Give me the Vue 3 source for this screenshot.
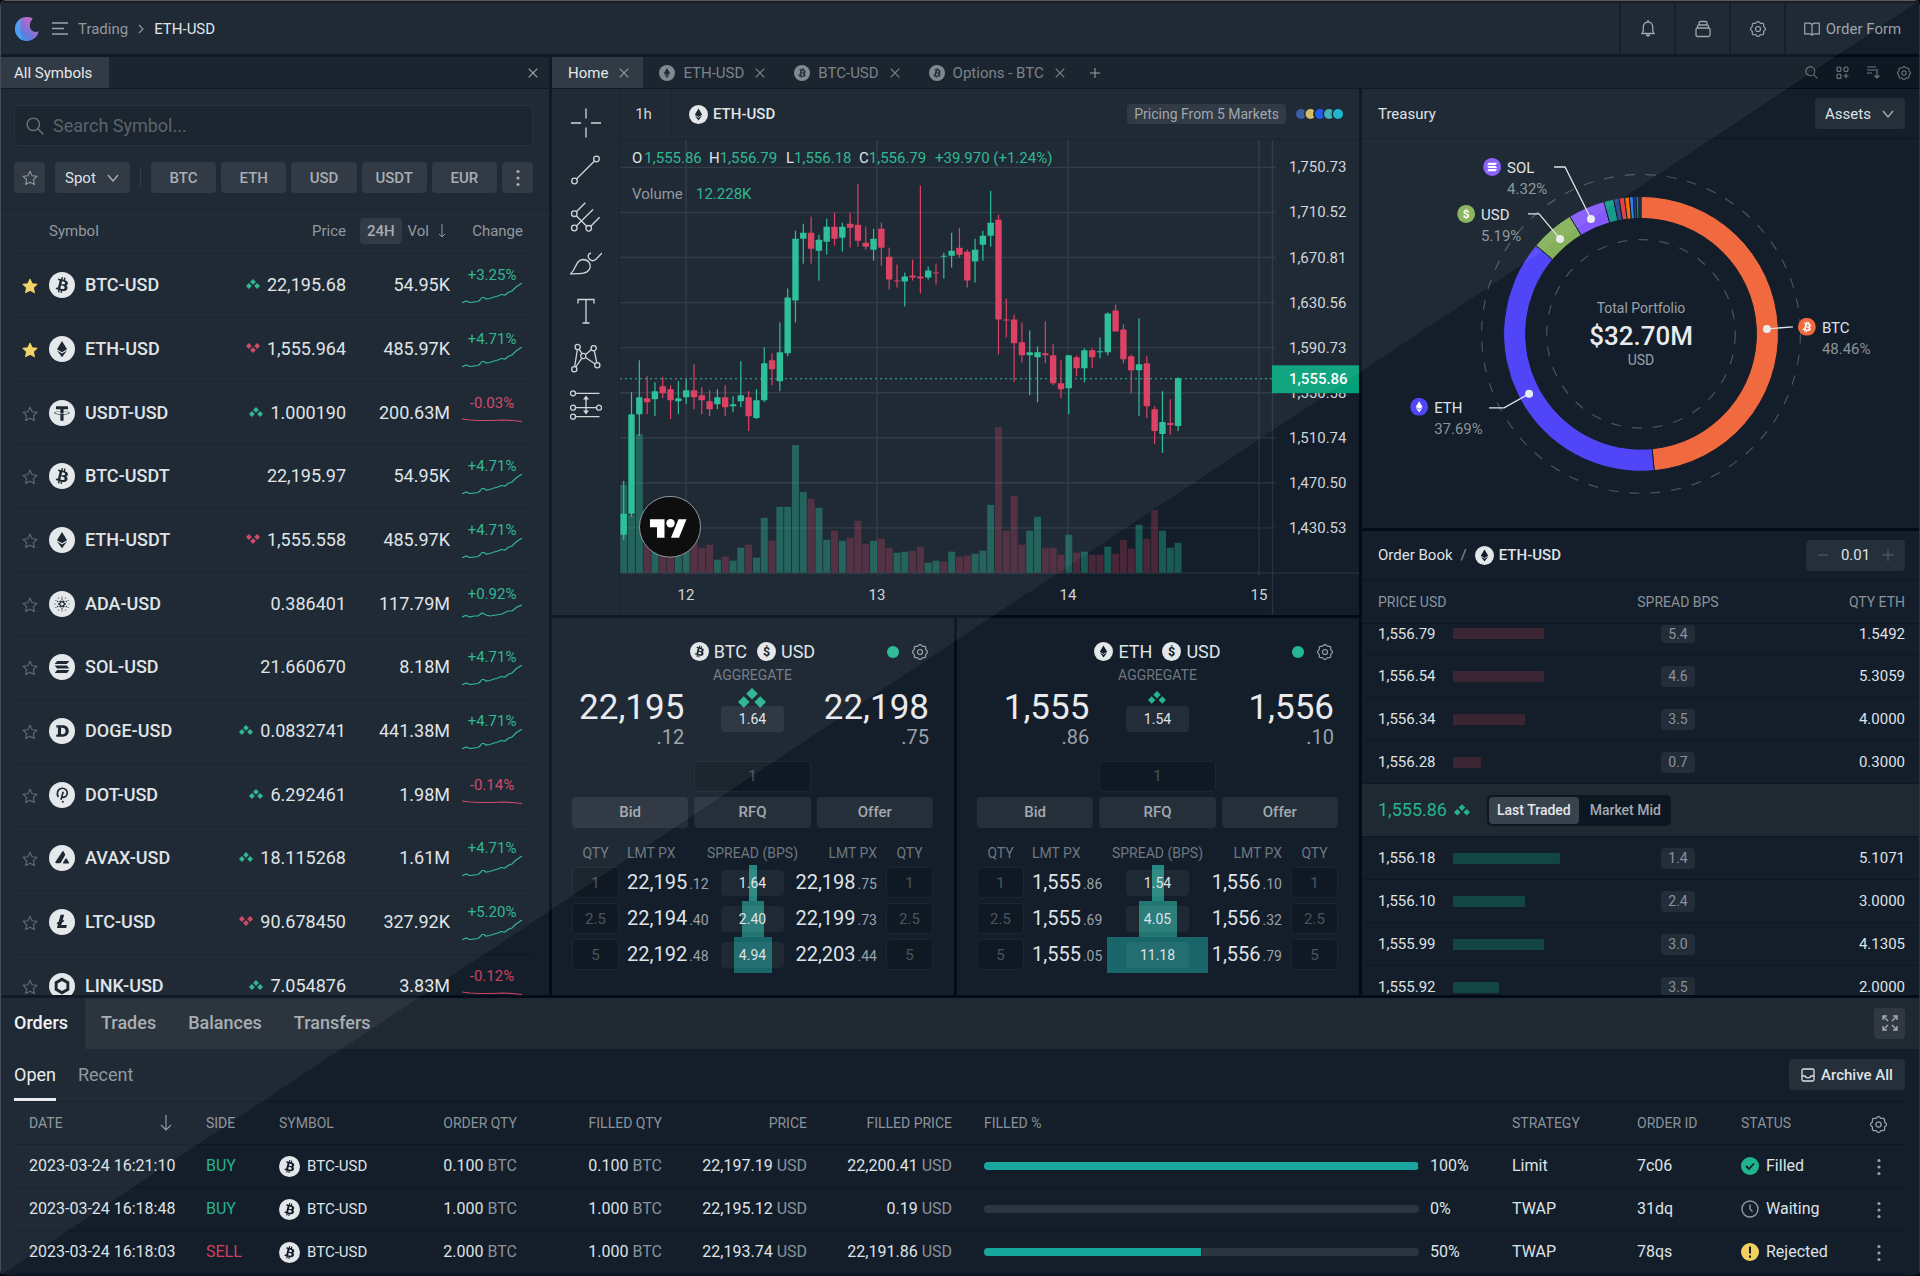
<script setup>
import { ref } from 'vue'

const search = ref('')
const market = ref('Spot')
const treasuryView = ref('Assets')
const priceMode = ref('last')

const quotes = ['BTC', 'ETH', 'USD', 'USDT', 'EUR']

const sparks = {
  rise: '0,20 2,19 4,18 8,19.5 12,19 16,18.5 18,17 20,14.5 22,14.5 24,16 28,15.5 32,14 36,13 39,11.5 43,12 46,9.5 50,8 54,4 57,2 60,0',
  flat: '0,8 8,9 18,9.5 30,9.5 40,9 50,9.5 60,10.5',
  mild: '0,15 4,13.5 8,15 12,14 16,14 20,11 24,13 28,14 34,13 40,12 46,9 50,9 55,5 60,3',
}

const symbols = [
  { fav: true, coin: 'btc', name: 'BTC-USD', dir: 'up', price: '22,195.68', vol: '54.95K', change: '+3.25%', spark: 'rise' },
  { fav: true, coin: 'eth', name: 'ETH-USD', dir: 'down', price: '1,555.964', vol: '485.97K', change: '+4.71%', spark: 'rise' },
  { coin: 'usdt', name: 'USDT-USD', dir: 'up', price: '1.000190', vol: '200.63M', change: '-0.03%', spark: 'flat' },
  { coin: 'btc', name: 'BTC-USDT', price: '22,195.97', vol: '54.95K', change: '+4.71%', spark: 'rise' },
  { coin: 'eth', name: 'ETH-USDT', dir: 'down', price: '1,555.558', vol: '485.97K', change: '+4.71%', spark: 'rise' },
  { coin: 'ada', name: 'ADA-USD', price: '0.386401', vol: '117.79M', change: '+0.92%', spark: 'mild' },
  { coin: 'sol', name: 'SOL-USD', price: '21.660670', vol: '8.18M', change: '+4.71%', spark: 'rise' },
  { coin: 'doge', name: 'DOGE-USD', dir: 'up', price: '0.0832741', vol: '441.38M', change: '+4.71%', spark: 'rise' },
  { coin: 'dot', name: 'DOT-USD', dir: 'up', price: '6.292461', vol: '1.98M', change: '-0.14%', spark: 'flat' },
  { coin: 'avax', name: 'AVAX-USD', dir: 'up', price: '18.115268', vol: '1.61M', change: '+4.71%', spark: 'rise' },
  { coin: 'ltc', name: 'LTC-USD', dir: 'down', price: '90.678450', vol: '327.92K', change: '+5.20%', spark: 'rise' },
  { coin: 'link', name: 'LINK-USD', dir: 'up', price: '7.054876', vol: '3.83M', change: '-0.12%', spark: 'flat' },
]

const tabs = [
  { coin: 'eth', name: 'ETH-USD' },
  { coin: 'btc', name: 'BTC-USD' },
  { coin: 'btc', name: 'Options - BTC' },
]

// Candles: direction, high, body top, body bottom, low, volume top, volume direction when it differs
const candleRows = [
  ['g', 481, 514, 535, 540, 485], ['g', 392, 414, 514, 517, 515], ['g', 360, 397, 414, 436, 434],
  ['r', 376, 398, 402, 414, 545], ['g', 382, 391, 399, 416, 543], ['r', 377, 386, 393, 398, 550],
  ['r', 385, 389, 400, 419, 553], ['g', 381, 398, 401, 414, 556], ['g', 379, 390, 397, 404, 545],
  ['r', 364, 390, 397, 409, 543], ['r', 387, 395, 400, 414, 548], ['r', 390, 401, 409, 416, 545],
  ['g', 389, 397, 404, 409, 560], ['r', 385, 397, 407, 416, 557], ['g', 396, 404, 406, 412, 561],
  ['g', 361, 395, 401, 407, 548], ['r', 391, 397, 416, 431, 545], ['g', 389, 400, 418, 419, 558],
  ['g', 347, 363, 400, 402, 518], ['r', 353, 360, 369, 385, 541], ['g', 322, 352, 381, 391, 507],
  ['g', 288, 297, 353, 356, 507], ['g', 230, 238, 300, 322, 445], ['g', 223, 232, 238, 263, 492],
  ['r', 216, 232, 248, 263, 499], ['g', 234, 239, 250, 280, 508], ['g', 218, 226, 241, 254, 540],
  ['r', 212, 226, 238, 245, 531], ['g', 222, 226, 237, 251, 541], ['r', 212, 223, 227, 247, 538],
  ['r', 183, 224, 240, 246, 521], ['r', 226, 242, 246, 249, 544], ['g', 228, 238, 249, 260, 541],
  ['r', 222, 228, 247, 265, 539], ['r', 247, 256, 279, 289, 548], ['r', 264, 280, 281, 287, 553, 'g'],
  ['g', 272, 276, 281, 306, 552], ['r', 259, 275, 277, 280, 551], ['r', 185, 276, 278, 293, 547],
  ['g', 266, 270, 277, 279, 563], ['r', 263, 272, 273, 284, 561, 'g'], ['g', 252, 255, 256, 278, 562, 'r'],
  ['g', 232, 250, 255, 267, 552], ['r', 227, 247, 254, 257, 557], ['r', 249, 251, 280, 287, 556],
  ['g', 238, 249, 261, 282, 554], ['g', 230, 235, 244, 260, 551], ['g', 190, 222, 235, 246, 505],
  ['r', 214, 219, 319, 354, 427], ['r', 298, 319, 320, 337, 531], ['r', 314, 319, 343, 382, 496],
  ['r', 322, 342, 355, 362, 545], ['g', 330, 352, 355, 395, 531], ['g', 346, 352, 357, 402, 517],
  ['r', 321, 353, 355, 363, 548], ['r', 344, 355, 383, 385, 548], ['r', 360, 383, 389, 398, 555],
  ['g', 355, 355, 388, 414, 535], ['r', 355, 357, 368, 376, 553], ['g', 348, 350, 368, 382, 552],
  ['r', 348, 350, 357, 368, 555], ['g', 337, 351, 352, 358, 555, 'r'], ['g', 312, 313, 352, 355, 547],
  ['r', 304, 310, 331, 331, 554], ['r', 324, 329, 359, 363, 540], ['r', 354, 356, 370, 393, 549],
  ['g', 318, 364, 370, 416, 525], ['r', 356, 363, 406, 418, 539], ['r', 406, 409, 431, 444, 510],
  ['g', 391, 422, 434, 453, 531], ['r', 399, 423, 425, 435, 548, 'g'], ['g', 377, 378, 426, 431, 543],
]
const candles = candleRows.map(([dir, high, top, bottom, low, volume, volumeDir], i) => ({
  x: 623.7 + i * 7.808, dir, high, top, bottom, low, volume, volumeDir: volumeDir || dir,
}))

const priceTicks = ['1,750.73', '1,710.52', '1,670.81', '1,630.56', '1,590.73', '1,550.58', '1,510.74', '1,470.50', '1,430.53']
  .map((label, i) => ({ label, y: 166.5 + i * 45.2 }))
const dayTicks = ['12', '13', '14', '15'].map((label, i) => ({ label, x: 686 + i * 191 }))

const tickets = [
  {
    base: 'BTC', coin: 'btc', bid: '22,195', bidFrac: '.12', ask: '22,198', askFrac: '.75', spread: '1.64', arrow: 'large',
    levels: [
      { qty: '1', bid: '22,195', bidFrac: '.12', spread: '1.64', depth: 8, ask: '22,198', askFrac: '.75' },
      { qty: '2.5', bid: '22,194', bidFrac: '.40', spread: '2.40', depth: 22, ask: '22,199', askFrac: '.73' },
      { qty: '5', bid: '22,192', bidFrac: '.48', spread: '4.94', depth: 38, ask: '22,203', askFrac: '.44' },
    ],
  },
  {
    base: 'ETH', coin: 'eth', bid: '1,555', bidFrac: '.86', ask: '1,556', askFrac: '.10', spread: '1.54', arrow: 'small',
    levels: [
      { qty: '1', bid: '1,555', bidFrac: '.86', spread: '1.54', depth: 12, ask: '1,556', askFrac: '.10' },
      { qty: '2.5', bid: '1,555', bidFrac: '.69', spread: '4.05', depth: 38, ask: '1,556', askFrac: '.32' },
      { qty: '5', bid: '1,555', bidFrac: '.05', spread: '11.18', depth: 101, ask: '1,556', askFrac: '.79' },
    ],
  },
]

const CX = 1641
const CY = 334
function polar(r, deg) {
  const a = (deg * Math.PI) / 180
  return `${(CX + r * Math.sin(a)).toFixed(2)} ${(CY - r * Math.cos(a)).toFixed(2)}`
}
function slice(from, to) {
  const large = to - from > 180 ? 1 : 0
  return `M${polar(137.5, from)}A137.5 137.5 0 ${large} 1 ${polar(137.5, to)}L${polar(115.5, to)}A115.5 115.5 0 ${large} 0 ${polar(115.5, from)}Z`
}
const slices = [
  { color: '#f16a3f', from: 0, to: 174.5 },
  { color: '#5046f8', from: 174.5, to: 310.1 },
  { color: '#84b15a', from: 310.1, to: 328.8 },
  { color: '#8459fa', from: 328.8, to: 344.3 },
  { color: '#159a8c', from: 344.3, to: 348.5 },
  { color: '#2d4f91', from: 348.5, to: 350.8 },
  { color: '#e2424c', from: 350.8, to: 353.1 },
  { color: '#ff6a0a', from: 353.1, to: 355.2 },
  { color: '#2f86de', from: 355.2, to: 356.8 },
  { color: '#2b3aa8', from: 356.8, to: 358 },
  { color: '#12a08e', from: 358, to: 359.1 },
  { color: '#22406e', from: 359.1, to: 360 },
].map((s) => ({ color: s.color, d: slice(s.from, s.to) }))

const holdings = [
  { name: 'SOL', share: '4.32%', coin: 'sol', color: '#8459fa', x: 1492, y: 167, dot: [1591, 219], line: '1591,219 1565,167 1554,167' },
  { name: 'USD', share: '5.19%', coin: 'usd', color: '#84b15a', x: 1466, y: 214, dot: [1560, 239], line: '1560,239 1539,214 1528,214' },
  { name: 'ETH', share: '37.69%', coin: 'eth', color: '#5046f8', x: 1419, y: 407, dot: [1529, 394], line: '1529,394 1504,408 1489,408' },
  { name: 'BTC', share: '48.46%', coin: 'btc', color: '#f16a3f', x: 1807, y: 327, dot: [1767, 329], line: '1767,329 1793,327' },
]

const asks = [
  { price: '1,556.79', size: 91, bps: '5.4', qty: '1.5492' },
  { price: '1,556.54', size: 91, bps: '4.6', qty: '5.3059' },
  { price: '1,556.34', size: 72, bps: '3.5', qty: '4.0000' },
  { price: '1,556.28', size: 28, bps: '0.7', qty: '0.3000' },
]
const bids = [
  { price: '1,556.18', size: 107, bps: '1.4', qty: '5.1071' },
  { price: '1,556.10', size: 72, bps: '2.4', qty: '3.0000' },
  { price: '1,555.99', size: 91, bps: '3.0', qty: '4.1305' },
  { price: '1,555.92', size: 46, bps: '3.5', qty: '2.0000' },
]

const orders = [
  { date: '2023-03-24 16:21:10', side: 'BUY', qty: '0.100', filledQty: '0.100', price: '22,197.19', filledPrice: '22,200.41', pct: 100, strategy: 'Limit', id: '7c06', status: 'Filled' },
  { date: '2023-03-24 16:18:48', side: 'BUY', qty: '1.000', filledQty: '1.000', price: '22,195.12', filledPrice: '0.19', pct: 0, strategy: 'TWAP', id: '31dq', status: 'Waiting' },
  { date: '2023-03-24 16:18:03', side: 'SELL', qty: '2.000', filledQty: '1.000', price: '22,193.74', filledPrice: '22,191.86', pct: 50, strategy: 'TWAP', id: '78qs', status: 'Rejected' },
]

const gearPath = 'M' + Array.from({ length: 64 }, (_, i) => {
  const a = (i / 64) * Math.PI * 2
  const r = 6.9 + 0.65 * Math.cos(8 * a)
  return `${(8 + r * Math.sin(a)).toFixed(2)} ${(8 - r * Math.cos(a)).toFixed(2)}`
}).join('L') + 'Z'

const adaDots = [[3.2, 6, 1.5], [6.2, 6, 0.9], [8.6, 12, 0.7]].flatMap(([r, n, size], ring) =>
  Array.from({ length: n }, (_, i) => {
    const a = ((i + (ring === 1 ? 0.5 : 0)) / n) * Math.PI * 2
    return { x: 16 + r * Math.cos(a), y: 16 + r * Math.sin(a), size }
  }))
</script>

<template>
  <div class="app">
    <svg class="defs" aria-hidden="true">
      <defs>
        <symbol id="c-btc" viewBox="0 0 32 32">
          <circle class="disc" cx="16" cy="16" r="16" />
          <path class="glyph" d="M23.189 14.02c.314-2.096-1.283-3.223-3.465-3.975l.708-2.84-1.728-.43-.69 2.765c-.454-.114-.92-.22-1.385-.326l.695-2.783L15.596 6l-.708 2.839c-.376-.086-.746-.17-1.104-.26l.002-.009-2.384-.595-.46 1.846s1.283.294 1.256.312c.7.175.826.638.805 1.006l-.806 3.235c.048.012.11.03.18.057l-.183-.045-1.13 4.532c-.086.212-.303.531-.793.41.018.025-1.256-.313-1.256-.313l-.858 1.978 2.25.561c.418.105.828.215 1.231.318l-.715 2.872 1.727.43.708-2.84c.472.127.93.245 1.378.357l-.706 2.828 1.728.43.715-2.866c2.948.558 5.164.333 6.097-2.333.752-2.146-.037-3.385-1.588-4.192 1.13-.26 1.98-1.003 2.207-2.538zm-3.95 5.538c-.533 2.147-4.148.986-5.32.695l.95-3.805c1.172.293 4.929.872 4.37 3.11zm.535-5.569c-.487 1.953-3.495.96-4.47.717l.86-3.45c.975.243 4.118.696 3.61 2.733z" />
        </symbol>
        <symbol id="c-eth" viewBox="0 0 32 32">
          <circle class="disc" cx="16" cy="16" r="16" />
          <path class="glyph" d="M16 6l-6.2 10.3L16 20l6.2-3.7zM9.8 17.7L16 26.2l6.2-8.5-6.2 3.7z" />
        </symbol>
        <symbol id="c-usdt" viewBox="0 0 32 32">
          <circle class="disc" cx="16" cy="16" r="16" />
          <path class="glyph" d="M17.922 17.383v-.002c-.11.008-.677.042-1.942.042-1.01 0-1.721-.03-1.971-.042v.003c-3.888-.171-6.79-.848-6.79-1.658 0-.809 2.902-1.486 6.79-1.66v2.644c.254.018.982.061 1.988.061 1.207 0 1.812-.05 1.925-.06v-2.643c3.88.173 6.775.85 6.775 1.658 0 .81-2.895 1.485-6.775 1.657m0-3.59v-2.366h5.414V7.819H8.595v3.608h5.414v2.365c-4.4.202-7.709 1.074-7.709 2.118 0 1.044 3.309 1.915 7.709 2.118v7.582h3.913v-7.584c4.393-.202 7.694-1.073 7.694-2.116 0-1.043-3.301-1.914-7.694-2.117" />
        </symbol>
        <symbol id="c-ada" viewBox="0 0 32 32">
          <circle class="disc" cx="16" cy="16" r="16" />
          <circle v-for="(d, i) in adaDots" :key="i" class="glyph" :cx="d.x" :cy="d.y" :r="d.size" />
        </symbol>
        <symbol id="c-sol" viewBox="0 0 32 32">
          <circle class="disc" cx="16" cy="16" r="16" />
          <path class="glyph" d="M10 8.5h15l-3 3.8H7zM7 14.1h15l3 3.8H10zM10 19.7h15l-3 3.8H7z" />
        </symbol>
        <symbol id="c-doge" viewBox="0 0 32 32">
          <circle class="disc" cx="16" cy="16" r="16" />
          <path class="glyph" fill-rule="evenodd" d="M9 9h8c4.500 0 7.300 2.800 7.300 7s-2.800 7-7.300 7H9v-2.800h2v-8.400H9zM14.800 12v8h1.700c2.400 0 3.900-1.500 3.900-4s-1.500-4-3.900-4z" />
        </symbol>
        <symbol id="c-dot" viewBox="0 0 32 32">
          <circle class="disc" cx="16" cy="16" r="16" />
          <path class="glyph-line" d="M11.500 18.500c-2.500-4-1.500-10 4.500-10.800 4-.2 6.500 2.500 6.500 5.700 0 3.600-2.800 5.800-6.500 5.400M17.500 12l-2.800 10" />
          <circle class="glyph" cx="17" cy="24.300" r="1.300" />
        </symbol>
        <symbol id="c-avax" viewBox="0 0 32 32">
          <circle class="disc" cx="16" cy="16" r="16" />
          <path class="glyph" d="M16.200 8.200c.6-1 1.500-1 2 0l1.400 2.500c.4.800.4 1.400 0 2.200l-4.700 8.300c-.5.800-1 1.200-2 1.200H9c-1.200 0-1.600-.8-1-1.800zM20 17.200c.6-1 1.400-1 2 0l2.500 4c.6 1 .2 1.700-1 1.700h-5c-1.200 0-1.600-.8-1-1.700z" />
        </symbol>
        <symbol id="c-ltc" viewBox="0 0 32 32">
          <circle class="disc" cx="16" cy="16" r="16" />
          <path class="glyph" d="M14.200 7h4.500l-2 7.200 2-.8-.6 2.300-2.100.8-.9 3.300h7l-.9 3.700H9.700l1.500-5.400-1.800.7.600-2.300 1.900-.7z" />
        </symbol>
        <symbol id="c-link" viewBox="0 0 32 32">
          <circle class="disc" cx="16" cy="16" r="16" />
          <path class="glyph" fill-rule="evenodd" d="M16 5.500l9 5.200v10.600l-9 5.200-9-5.200V10.700zm0 4.200l-5.400 3.100v6.400l5.400 3.100 5.400-3.100v-6.400z" />
        </symbol>
        <symbol id="c-usd" viewBox="0 0 32 32">
          <circle class="disc" cx="16" cy="16" r="16" />
          <text class="glyph dollar" x="16" y="23.500" text-anchor="middle">$</text>
        </symbol>
        <symbol id="i-gear" viewBox="0 0 16 16">
          <path :d="gearPath" fill="none" stroke="currentColor" stroke-width="1.200" />
          <circle cx="8" cy="8" r="2.500" fill="none" stroke="currentColor" stroke-width="1.200" />
        </symbol>
        <symbol id="i-close" viewBox="0 0 10 10">
          <path d="M.7.7l8.600 8.600M9.300.7L.7 9.300" stroke="currentColor" stroke-width="1.200" />
        </symbol>
        <symbol id="i-chevron" viewBox="0 0 12 8">
          <path d="M1 1l5 6 5-6" fill="none" stroke="currentColor" stroke-width="1.400" />
        </symbol>
        <symbol id="i-search" viewBox="0 0 18 18">
          <circle cx="7.300" cy="7.300" r="6.200" fill="none" stroke="currentColor" stroke-width="1.400" />
          <path d="M11.800 11.800l5.500 5.500" stroke="currentColor" stroke-width="1.400" />
        </symbol>
        <symbol id="i-up" viewBox="0 0 28 20">
          <path d="M14 0l5.800 5.800-5.800 5.800-5.800-5.800zM5.800 8.200l5.800 5.800-5.800 5.800L0 14zM22.200 8.200L28 14l-5.800 5.800-5.800-5.800z" fill="currentColor" />
        </symbol>
        <symbol id="i-down" viewBox="0 0 28 20">
          <path d="M14 20l5.800-5.800L14 8.400l-5.800 5.800zM5.800 11.800L11.600 6 5.800.2 0 6zM22.200 11.800L28 6 22.200.2 16.400 6z" fill="currentColor" />
        </symbol>
        <symbol id="i-star" viewBox="0 0 16 16">
          <path d="M8 1.200l2.100 4.500 4.800.6-3.500 3.400.9 4.900L8 12.200l-4.300 2.400.9-4.900L1.100 6.300l4.800-.6z" stroke="currentColor" stroke-linejoin="round" stroke-width="1.100" />
        </symbol>
        <symbol id="i-more" viewBox="0 0 4 18">
          <circle cx="2" cy="2.500" r="1.600" fill="currentColor" />
          <circle cx="2" cy="9" r="1.600" fill="currentColor" />
          <circle cx="2" cy="15.500" r="1.600" fill="currentColor" />
        </symbol>
        <symbol id="i-arrow" viewBox="0 0 12 16">
          <path d="M6 0v15M1 10l5 5 5-5" fill="none" stroke="currentColor" stroke-width="1.200" />
        </symbol>
        <linearGradient id="moon" x1="1" y1="0" x2="0.200" y2="1">
          <stop offset="0" stop-color="#d45cb4" />
          <stop offset="0.400" stop-color="#a063cc" />
          <stop offset="0.700" stop-color="#5a74da" />
          <stop offset="1" stop-color="#2f8fe8" />
        </linearGradient>
      </defs>
    </svg>

    <header class="topbar">
      <svg class="logo" width="24" height="24" viewBox="0 0 24 24">
        <path d="M17.800 1.500A12 12 0 1 0 23.700 14.300C19.500 16.300 15 13.500 14.800 9 14.700 6 16 3.300 17.800 1.500z" fill="url(#moon)" />
        <path d="M7 1.100A12 12 0 0 0 8 23.200C4.500 17 4.500 7 7 1.100z" fill="#3fa4f5" opacity=".8" />
      </svg>
      <button class="plain menu" aria-label="Menu">
        <svg width="16" height="13" viewBox="0 0 16 13"><path d="M0 1h16M0 6.500h12M0 12h16" stroke="currentColor" stroke-width="1.400" /></svg>
      </button>
      <nav class="crumbs">
        <a href="#trading">Trading</a>
        <svg width="6" height="10" viewBox="0 0 6 10"><path d="M1 1l4 4-4 4" fill="none" stroke="currentColor" stroke-width="1.200" /></svg>
        <a href="#eth-usd" class="current">ETH-USD</a>
      </nav>
      <div class="actions">
        <button class="plain" aria-label="Notifications">
          <svg width="16" height="18" viewBox="0 0 16 18"><path d="M2 13.500h12l-1.300-2.500V7c0-3-1.900-5-4.700-5S3.300 4 3.300 7v4zM6.500 13.500c0 3.300 3 3.300 3 0M8 0v2" fill="none" stroke="currentColor" stroke-width="1.300" /></svg>
        </button>
        <button class="plain" aria-label="Wallet">
          <svg width="16" height="18" viewBox="0 0 16 18"><rect x="1" y="8" width="14" height="8.500" rx="1.500" fill="none" stroke="currentColor" stroke-width="1.300" /><path d="M2.500 8V6.500q0-1.500 1.500-1.500h8q1.500 0 1.500 1.500V8M4 5V3q0-1.500 1.500-1.500h5q1.500 0 1.500 1.500v2" fill="none" stroke="currentColor" stroke-width="1.300" /></svg>
        </button>
        <button class="plain" aria-label="Settings"><svg width="16" height="16"><use href="#i-gear" /></svg></button>
        <button class="plain order-form">
          <svg width="16" height="14" viewBox="0 0 16 14"><path d="M8 2v11M8 2.500C7 1.500 6 1.200 4.500 1.200H.7v10.600h4C6.200 11.800 7 12.200 8 13c1-.8 1.800-1.200 3.300-1.200h4V1.200h-3.800C10 1.200 9 1.500 8 2.500z" fill="none" stroke="currentColor" stroke-width="1.200" /></svg>
          Order Form
        </button>
      </div>
    </header>

    <main class="workspace">
      <section class="column">
        <div class="tabbar">
          <button class="tab active symbols-tab">All Symbols</button>
          <button class="plain panel-close" aria-label="Close panel"><svg width="10" height="10"><use href="#i-close" /></svg></button>
        </div>
        <div class="panel symbols">
          <div class="filters">
            <label class="search">
              <svg width="18" height="18"><use href="#i-search" /></svg>
              <input v-model="search" type="text" placeholder="Search Symbol..." aria-label="Search Symbol" />
            </label>
            <div class="chips">
              <button class="btn square" aria-label="Favourites"><svg class="star" width="16" height="16"><use href="#i-star" /></svg></button>
              <label class="select spot">
                <select v-model="market" aria-label="Market"><option>Spot</option><option>Futures</option></select>
                <svg width="12" height="8"><use href="#i-chevron" /></svg>
              </label>
              <span class="rule"></span>
              <div class="quotes"><button v-for="q in quotes" :key="q" class="btn">{{ q }}</button></div>
              <button class="btn square" aria-label="More"><svg width="4" height="18"><use href="#i-more" /></svg></button>
            </div>
          </div>
          <div class="symbol-list">
            <table>
              <colgroup><col class="w-star" /><col /><col class="w-price" /><col class="w-vol" /><col class="w-change" /></colgroup>
              <thead>
                <tr>
                  <th></th><th class="left">Symbol</th><th>Price</th>
                  <th><span class="vol-head"><button class="tag">24H</button>Vol<svg width="8" height="14" viewBox="0 0 8 14"><path d="M4 0v13M1 10l3 3 3-3" fill="none" stroke="currentColor" /></svg></span></th>
                  <th class="change-head">Change</th>
                </tr>
              </thead>
              <tbody>
                <tr v-for="s in symbols" :key="s.name">
                  <td class="star-cell"><button class="plain" :aria-label="'Favourite ' + s.name"><svg class="star" :class="{ on: s.fav }" width="16" height="16"><use href="#i-star" /></svg></button></td>
                  <td><span class="pair-name"><svg class="coin" width="26" height="26"><use :href="'#c-' + s.coin" /></svg>{{ s.name }}</span></td>
                  <td class="num"><svg v-if="s.dir" class="tick" :class="s.dir" width="14" height="10"><use :href="'#i-' + s.dir" /></svg>{{ s.price }}</td>
                  <td class="num vol">{{ s.vol }}</td>
                  <td class="change-cell">
                    <div class="change" :class="s.change[0] === '+' ? 'up' : 'down'">
                      <span>{{ s.change }}</span>
                      <svg width="60" height="20" viewBox="0 0 60 20"><polyline :points="sparks[s.spark]" fill="none" stroke="currentColor" stroke-width="1.200" /></svg>
                    </div>
                  </td>
                </tr>
              </tbody>
            </table>
          </div>
        </div>
      </section>

      <section class="column">
        <div class="tabbar">
          <button class="tab home active">Home<svg width="10" height="10"><use href="#i-close" /></svg></button>
          <button v-for="t in tabs" :key="t.name" class="tab">
            <svg class="coin muted" width="16" height="16"><use :href="'#c-' + t.coin" /></svg>{{ t.name }}<svg width="10" height="10"><use href="#i-close" /></svg>
          </button>
          <button class="plain add" aria-label="Add tab"><svg width="10" height="10" viewBox="0 0 10 10"><path d="M5 0v10M0 5h10" stroke="currentColor" /></svg></button>
          <div class="tab-tools">
            <button class="plain" aria-label="Search"><svg width="13" height="13"><use href="#i-search" /></svg></button>
            <button class="plain" aria-label="Add widget"><svg width="13" height="13" viewBox="0 0 13 13"><g fill="none" stroke="currentColor" stroke-width="1.200"><rect x="1" y="1" width="4" height="4.500" rx="1.600" /><rect x="8" y="1" width="4" height="4.500" rx="1.600" /><rect x="1" y="8" width="4" height="4.500" rx="1.600" /><path d="M10 7.500v5M7.500 10h5" /></g></svg></button>
            <button class="plain" aria-label="Sort"><svg width="13" height="13" viewBox="0 0 13 13"><path d="M0 1h9M0 4h9M0 7h5M10 3v9M7.500 9.500l2.500 2.500 2.500-2.500" fill="none" stroke="currentColor" stroke-width="1.200" /></svg></button>
            <button class="plain" aria-label="Layout settings"><svg width="14" height="14"><use href="#i-gear" /></svg></button>
          </div>
        </div>

        <div class="board">
          <div class="center">
            <article class="panel chart">
              <div class="tools">
                <button class="plain" aria-label="Crosshair"><svg viewBox="-16 -16 32 32"><path d="M0-14.500v10M0 4.500v10M-15 0h10M5 0h10" /></svg></button>
                <button class="plain" aria-label="Trend line"><svg viewBox="-16 -16 32 32"><circle cx="-11.500" cy="11" r="2.800" /><circle cx="10.500" cy="-11" r="2.800" /><path d="M-9.500 9l18-18" /></svg></button>
                <button class="plain" aria-label="Pitchfork"><svg viewBox="-16 -16 32 32"><circle cx="-11.700" cy="-3.300" r="2.800" /><circle cx="-11.700" cy="11" r="2.800" /><circle cx="2.700" cy="11.300" r="2.800" /><path d="M-9.700-5.300l9-9M-9.700-1.300l10.400 10.600M-9.700 9L7-7.500M4.700 9.300l9-9" /></svg></button>
                <button class="plain" aria-label="Brush"><svg viewBox="-16 -16 32 32"><path d="M-15.300 9.800C-9.500 4-10-4-3-4.500 2.500-4.500 5.500 0 3.500 5 1 10-4 9.800-15.300 9.800zM5-11C2-10.500 1-7 4-4.500 6-2.500 8-3 10-4.800L16-11" /></svg></button>
                <button class="plain" aria-label="Text tool"><svg viewBox="-16 -16 32 32"><path d="M-8-7.500V-11.500H8v4M0-11.500V12M-3.500 12h7" /></svg></button>
                <button class="plain" aria-label="Pattern"><svg viewBox="-16 -16 32 32"><path d="M-11.300 8.500l2.600-16.700M-7-8.800l3 4.500M-10.200 9L-4.300.3M-.6-3.400l6.200-5M8.300-7l2.500 11.600M-.5-.5l9.600 6.500" /><circle cx="-11.700" cy="11.300" r="2.600" /><circle cx="-8.300" cy="-11" r="2.600" /><circle cx="-2.700" cy="-2" r="2.600" /><circle cx="7.700" cy="-9.700" r="2.600" /><circle cx="11.300" cy="7.300" r="2.600" /></svg></button>
                <button class="plain" aria-label="Position"><svg viewBox="-16 -16 32 32"><circle cx="-13" cy="-11.700" r="2.500" /><circle cx="-13" cy="2.700" r="2.500" /><circle cx="13" cy="2.700" r="2.500" /><circle cx="-13" cy="11.700" r="2.500" /><path d="M-10.500-11.700h24M-10.500 2.700h21M-10.500 11.700h24M0-7v15" /><path class="solid" d="M0-9.500l3 4h-6zM0 9.500l3-4h-6z" /></svg></button>
              </div>
              <div class="chart-main">
                <div class="chart-head">
                  <button class="plain interval">1h</button>
                  <h2><svg class="coin" width="19" height="19"><use href="#c-eth" /></svg>ETH-USD</h2>
                  <span class="badge">Pricing From 5 Markets</span>
                  <svg class="venues" width="49" height="12" viewBox="0 0 49 12">
                    <circle cx="6" cy="6" r="5" fill="#31569e" />
                    <circle cx="15" cy="6" r="6" fill="#131e2a" /><circle cx="15.500" cy="6" r="5" fill="#d3b65f" />
                    <circle cx="24" cy="6" r="6" fill="#131e2a" /><circle cx="25" cy="6" r="5" fill="#1652f0" />
                    <circle cx="33.500" cy="6" r="6" fill="#131e2a" /><circle cx="34" cy="6" r="5" fill="#34aeb0" />
                    <circle cx="42.500" cy="6" r="6" fill="#131e2a" /><circle cx="43" cy="6" r="5" fill="#12b5cb" />
                  </svg>
                </div>
                <svg class="plot" viewBox="620 139 739 476" preserveAspectRatio="none">
                  <g class="grid">
                    <path v-for="t in priceTicks" :key="t.label" :d="`M620 ${t.y}H1276`" />
                    <path v-for="t in dayTicks" :key="t.label" :d="`M${t.x} 139V576`" />
                    <path d="M1272.500 139V615M620 573.500H1359" />
                  </g>
                  <g v-for="c in candles" :key="'v' + c.x" :class="['volume', c.volumeDir]">
                    <rect :x="c.x - 3.5" :y="c.volume" width="7" :height="573 - c.volume" />
                  </g>
                  <g v-for="c in candles" :key="c.x" :class="['candle', c.dir]">
                    <rect :x="c.x - 0.6" :y="c.high" width="1.200" :height="c.low - c.high" />
                    <rect :x="c.x - 3.2" :y="c.top" width="6.400" :height="c.bottom - c.top" rx="0.500" />
                  </g>
                  <path class="last-line" d="M620 378.500H1272" />
                  <g class="axis">
                    <text v-for="t in priceTicks" :key="t.label" x="1289" :y="t.y + 5">{{ t.label }}</text>
                    <text v-for="t in dayTicks" :key="t.label" :x="t.x" y="600" text-anchor="middle">{{ t.label }}</text>
                  </g>
                  <rect x="1272" y="365" width="87" height="28" fill="#04a079" />
                  <text class="last-price" x="1289" y="384">1,555.86</text>
                  <text class="ohlc" x="632" y="162"><tspan class="key">O</tspan><tspan dx="2">1,555.86</tspan></text>
                  <text class="ohlc" x="709" y="162"><tspan class="key">H</tspan>1,556.79</text>
                  <text class="ohlc" x="786" y="162"><tspan class="key">L</tspan>1,556.18</text>
                  <text class="ohlc" x="859" y="162"><tspan class="key">C</tspan>1,556.79</text>
                  <text class="ohlc" x="935" y="162">+39.970 (+1.24%)</text>
                  <text class="ohlc" x="632" y="198"><tspan class="label">Volume</tspan></text>
                  <text class="ohlc" x="696" y="198">12.228K</text>
                  <circle cx="670" cy="527" r="30.500" fill="#000" stroke="#8b929b" />
                  <g fill="#fff"><path d="M650 519.500h14.500V538H657v-10.500h-7z" /><circle cx="670.500" cy="523.500" r="4.200" /><path d="M678.500 519.500h8L679 538h-8z" /></g>
                </svg>
              </div>
            </article>

            <div class="tickets">
              <article v-for="t in tickets" :key="t.base" class="panel ticket">
                <header>
                  <h3>
                    <svg class="coin" width="19" height="19"><use :href="'#c-' + t.coin" /></svg>{{ t.base }}
                    <svg class="coin second" width="19" height="19"><use href="#c-usd" /></svg>USD
                  </h3>
                  <div class="state"><i class="live"></i><button class="plain" :aria-label="t.base + ' ticket settings'"><svg width="16" height="16"><use href="#i-gear" /></svg></button></div>
                </header>
                <p class="aggregate">AGGREGATE</p>
                <div class="prices">
                  <div class="price"><b>{{ t.bid }}</b><span>{{ t.bidFrac }}</span></div>
                  <div class="spread">
                    <span class="arrow up"><svg :class="t.arrow"><use href="#i-up" /></svg></span>
                    <span class="bps">{{ t.spread }}</span>
                  </div>
                  <div class="price"><b>{{ t.ask }}</b><span>{{ t.askFrac }}</span></div>
                </div>
                <div class="quantity"><input type="text" value="1" :aria-label="t.base + ' quantity'" /></div>
                <div class="trade"><button class="btn">Bid</button><button class="btn">RFQ</button><button class="btn">Offer</button></div>
                <div class="level labels"><span>QTY</span><span class="lmt">LMT PX</span><span>SPREAD (BPS)</span><span class="lmt right">LMT PX</span><span>QTY</span></div>
                <div v-for="(l, i) in t.levels" :key="l.qty" class="level">
                  <input type="text" :value="l.qty" :aria-label="'Bid quantity ' + l.qty" />
                  <span class="lmt">{{ l.bid }}<small>{{ l.bidFrac }}</small></span>
                  <span class="depth" :class="'step-' + i"><i :style="{ width: l.depth + 'px' }"></i><span class="bps">{{ l.spread }}</span></span>
                  <span class="lmt right">{{ l.ask }}<small>{{ l.askFrac }}</small></span>
                  <input type="text" :value="l.qty" :aria-label="'Offer quantity ' + l.qty" />
                </div>
              </article>
            </div>
          </div>

          <div class="side">
            <article class="panel treasury">
              <header class="panel-head">
                <h2>Treasury</h2>
                <label class="select assets">
                  <select v-model="treasuryView" aria-label="Treasury view"><option>Assets</option><option>Venues</option></select>
                  <svg width="12" height="8"><use href="#i-chevron" /></svg>
                </label>
              </header>
              <svg class="donut" viewBox="1362 139 557 389">
                <circle :cx="CX" :cy="CY" r="159.500" class="dash" />
                <circle :cx="CX" :cy="CY" r="94.300" class="dash" />
                <path v-for="s in slices" :key="s.d" :d="s.d" :fill="s.color" stroke="#131e2a" stroke-width="1" />
                <g v-for="h in holdings" :key="h.name">
                  <polyline :points="h.line" fill="none" stroke="#dfe3e6" stroke-width="1.300" />
                  <circle :cx="h.dot[0]" :cy="h.dot[1]" r="4" fill="#e9ecee" />
                  <use class="coin tinted" :href="'#c-' + h.coin" :x="h.x - 9" :y="h.y - 9" width="18" height="18" :style="{ '--disc': h.color }" />
                  <text class="holding" :x="h.x + 15" :y="h.y + 6">{{ h.name }}</text>
                  <text class="share" :x="h.x + 15" :y="h.y + 27">{{ h.share }}</text>
                </g>
                <g text-anchor="middle">
                  <text class="muted-text" :x="CX" y="313">Total Portfolio</text>
                  <text class="total" :x="CX" y="345">$32.70M</text>
                  <text class="muted-text" :x="CX" y="365">USD</text>
                </g>
              </svg>
            </article>

            <article class="panel book">
              <header class="panel-head">
                <h2>Order Book <span class="slash">/</span> <svg class="coin" width="19" height="19"><use href="#c-eth" /></svg><strong>ETH-USD</strong></h2>
                <div class="stepper">
                  <button class="plain" aria-label="Decrease tick"><svg width="12" height="12" viewBox="0 0 12 12"><path d="M1 6h10" stroke="currentColor" /></svg></button>
                  <span>0.01</span>
                  <button class="plain" aria-label="Increase tick"><svg width="12" height="12" viewBox="0 0 12 12"><path d="M0 6h12M6 0v12" stroke="currentColor" /></svg></button>
                </div>
              </header>
              <table>
                <colgroup><col class="w-book-price" /><col /><col class="w-book-bps" /><col class="w-book-qty" /></colgroup>
                <thead><tr><th>PRICE USD</th><th></th><th class="mid">SPREAD BPS</th><th class="right">QTY ETH</th></tr></thead>
                <tbody>
                  <tr v-for="a in asks" :key="a.price" class="ask">
                    <td>{{ a.price }}</td><td><i class="bar" :style="{ width: a.size + 'px' }"></i></td><td class="mid"><span class="bps">{{ a.bps }}</span></td><td class="right">{{ a.qty }}</td>
                  </tr>
                  <tr class="spot-row">
                    <td colspan="4">
                      <div class="spot-price">
                        <span class="up">1,555.86</span>
                        <svg class="up" width="16" height="12"><use href="#i-up" /></svg>
                        <div class="toggle">
                          <button :aria-pressed="priceMode === 'last'" @click="priceMode = 'last'">Last Traded</button>
                          <button :aria-pressed="priceMode === 'mid'" @click="priceMode = 'mid'">Market Mid</button>
                        </div>
                      </div>
                    </td>
                  </tr>
                  <tr v-for="b in bids" :key="b.price" class="bid">
                    <td>{{ b.price }}</td><td><i class="bar" :style="{ width: b.size + 'px' }"></i></td><td class="mid"><span class="bps">{{ b.bps }}</span></td><td class="right">{{ b.qty }}</td>
                  </tr>
                </tbody>
              </table>
            </article>
          </div>
        </div>
      </section>
    </main>

    <section class="panel orders">
      <nav class="order-tabs">
        <button class="active">Orders</button><button>Trades</button><button>Balances</button><button>Transfers</button>
        <button class="btn square expand" aria-label="Expand"><svg width="16" height="16" viewBox="0 0 16 16"><g fill="none" stroke="currentColor" stroke-width="1.400"><path d="M1 5V1h4M1 1l5 5M11 1h4v4M15 1l-5 5M1 11v4h4M1 15l5-5M15 11v4h-4M15 15l-5-5" /></g></svg></button>
      </nav>
      <div class="sub-tabs">
        <button class="active">Open</button><button>Recent</button>
        <button class="btn archive"><svg width="14" height="14" viewBox="0 0 14 14"><g fill="none" stroke="currentColor" stroke-width="1.300"><rect x="1" y="1" width="12" height="12" rx="1.500" /><path d="M1 8h3c.6 2.500 5.400 2.500 6 0h3" /></g></svg>Archive All</button>
      </div>
      <div class="order-table">
        <table>
          <colgroup>
            <col class="w-date" /><col class="w-side" /><col class="w-symbol" /><col class="w-symbol" /><col class="w-qty" /><col class="w-qty" /><col class="w-qty" />
            <col /><col class="w-strategy" /><col class="w-id" /><col class="w-status" /><col class="w-menu" />
          </colgroup>
          <thead>
            <tr>
              <th><span class="date-head">DATE<svg width="12" height="16"><use href="#i-arrow" /></svg></span></th>
              <th>SIDE</th><th>SYMBOL</th><th class="right">ORDER QTY</th><th class="right">FILLED QTY</th><th class="right">PRICE</th><th class="right">FILLED PRICE</th>
              <th>FILLED %</th><th>STRATEGY</th><th>ORDER ID</th><th>STATUS</th>
              <th class="menu-cell"><button class="plain" aria-label="Column settings"><svg width="17" height="17"><use href="#i-gear" /></svg></button></th>
            </tr>
          </thead>
          <tbody>
            <tr v-for="o in orders" :key="o.date">
              <td>{{ o.date }}</td>
              <td :class="o.side === 'BUY' ? 'up' : 'down'">{{ o.side }}</td>
              <td><span class="order-symbol"><svg class="coin" width="21" height="21"><use href="#c-btc" /></svg>BTC-USD</span></td>
              <td class="right">{{ o.qty }} <em>BTC</em></td>
              <td class="right">{{ o.filledQty }} <em>BTC</em></td>
              <td class="right">{{ o.price }} <em>USD</em></td>
              <td class="right">{{ o.filledPrice }} <em>USD</em></td>
              <td><div class="fill"><div class="track" role="progressbar" :aria-valuenow="o.pct" aria-valuemin="0" aria-valuemax="100" aria-label="Filled"><i v-if="o.pct" :style="{ width: o.pct + '%' }"></i></div><span>{{ o.pct }}%</span></div></td>
              <td>{{ o.strategy }}</td>
              <td>{{ o.id }}</td>
              <td>
                <span class="status">
                  <svg width="18" height="18" viewBox="0 0 18 18">
                    <template v-if="o.status === 'Filled'"><circle cx="9" cy="9" r="9" fill="#20b48d" /><path d="M5 9l3 3 5-5.500" fill="none" stroke="#131e2a" stroke-width="1.800" /></template>
                    <template v-else-if="o.status === 'Waiting'"><circle cx="9" cy="9" r="8" fill="none" stroke="#8f969e" stroke-width="1.400" /><path d="M9 4.500V9l2.500 2.500" fill="none" stroke="#8f969e" stroke-width="1.400" /></template>
                    <template v-else><circle cx="9" cy="9" r="9" fill="#f2cf5f" /><path d="M9 3.500v7M9 12.500v2.300" stroke="#131e2a" stroke-width="2" /></template>
                  </svg>{{ o.status }}
                </span>
              </td>
              <td class="menu-cell"><button class="plain" aria-label="Order menu"><svg width="4" height="18"><use href="#i-more" /></svg></button></td>
            </tr>
          </tbody>
        </table>
      </div>
    </section>
    <div class="sheen"></div>
  </div>
</template>

<style>
body { margin: 0; background: #05090e; }
</style>

<style scoped>
* { box-sizing: border-box; }
.app {
  position: relative;
  display: flex;
  flex-direction: column;
  height: 100vh;
  overflow: hidden;
  border: 1px solid;
  border-color: #5a5d5b #2a3540 #0a1018 #434d57;
  border-radius: 6px;
  background: #020c18;
  color: #dfe2e6;
  font: 15px/20px Roboto, "Noto Sans", sans-serif;
}
.defs { position: absolute; width: 0; height: 0; }
.sheen {
  position: absolute;
  inset: 0;
  pointer-events: none;
  background: linear-gradient(to bottom right, rgba(255, 255, 255, 0.055) 50%, transparent 50%);
}
h2, h3, p { margin: 0; font-weight: 400; }
em, i { font-style: normal; }
svg { display: block; flex: none; }
button, input, select { font: inherit; color: inherit; margin: 0; }
button { cursor: pointer; white-space: nowrap; }
table { width: 100%; border-collapse: collapse; table-layout: fixed; }
th { font-weight: 400; color: #8b929a; }
td, th { padding: 0; white-space: nowrap; }
.left { text-align: left; }
.right { text-align: right; }
.mid { text-align: center; }
.up { color: #26b38e; }
.down { color: #cf4060; }
.plain { display: inline-flex; align-items: center; justify-content: center; padding: 0; border: 0; background: none; color: #98a0a8; vertical-align: middle; }
.panel { background: #131e2a; min-width: 0; min-height: 0; }
.btn {
  display: inline-flex; align-items: center; justify-content: center;
  height: 31px; padding: 0; border: 0; border-radius: 4px;
  background: rgba(255, 255, 255, 0.08); color: #a3a9b0; font-weight: 500;
}
.square { width: 31px; }
.disc { fill: var(--disc, #e4e7ea); }
.glyph { fill: var(--glyph, #111c28); }
.glyph-line { fill: none; stroke: var(--glyph, #111c28); stroke-width: 2; }
.dollar { font: 700 21px Roboto, sans-serif; }
.coin.muted { --disc: #7a828a; --glyph: #131e2a; }
.coin.tinted { --glyph: #fff; }

.topbar { display: flex; align-items: center; height: 56px; padding-left: 14px; border-top: 2px solid #0a1018; border-bottom: 3px solid #020c18; background: #131e2a; flex: none; }
.menu { margin: 0 10px 0 13px; }
.crumbs { display: flex; align-items: center; gap: 10px; color: #868e96; }
.crumbs a { color: #8b9299; text-decoration: none; }
.crumbs a.current { color: #dfe2e6; }
.actions { display: flex; align-self: stretch; margin-left: auto; }
.actions .plain { width: 55px; border-left: 2px solid #08131f; }
.actions .order-form { width: 135px; gap: 6px; }

.workspace { display: grid; grid-template-columns: 548fr 1367fr; gap: 3px; flex: 1; min-height: 0; }
.column { display: flex; flex-direction: column; min-width: 0; min-height: 0; }
.tabbar { display: flex; align-items: center; height: 32px; border-bottom: 1px solid #020c18; background: #0e1823; flex: none; }
.tab { display: flex; align-items: center; height: 31px; padding: 0 13px 0 16px; border: 0; background: none; color: #747c84; }
.tab svg:last-child { margin-left: 11px; }
.tab .coin { margin-right: 8px; }
.tab.active { background: #25303b; color: #e4e7ea; }
.tab.home { padding-right: 14px; }
.tab.symbols-tab { padding: 0 17px 0 13px; }
.tab.active svg { color: #8b929a; }
.panel-close { margin: 0 11px 0 auto; }
.add { margin-left: 12px; }
.tab-tools { display: flex; gap: 17px; margin: 0 8px 0 auto; }
.tab-tools .plain { width: 14px; color: #6f7881; }

.symbols { display: flex; flex-direction: column; flex: 1; overflow: hidden; }
.filters { padding: 16px 16px 16px 13px; border-bottom: 1px solid #0a1520; }
.search { display: flex; align-items: center; gap: 9px; height: 41px; padding: 0 11px; border: 1px solid #1a2633; border-radius: 4px; background: #0e1924; color: #626b74; }
.search input { flex: 1; min-width: 0; padding: 0; border: 0; outline: 0; background: none; font-size: 18px; line-height: 24px; }
.search input::placeholder { color: #515b65; opacity: 1; }
.chips { display: flex; align-items: center; margin-top: 16px; }
.star { color: #59636d; fill: none; }
.square .star { color: #8b929a; }
.star.on { color: #f2cf5f; fill: #f2cf5f; }
.select { position: relative; display: block; height: 31px; border-radius: 4px; background: rgba(255, 255, 255, 0.08); }
.select select { width: 100%; height: 100%; padding: 0 10px; border: 0; appearance: none; background: none; }
.select svg { position: absolute; right: 11px; top: 12px; color: #a3a9b0; pointer-events: none; }
.spot { width: 75px; margin-left: 10px; }
.rule { width: 1px; height: 21px; margin: 0 10px; background: #26313d; }
.quotes { display: flex; gap: 5px; flex: 1; margin-right: 5px; }
.quotes .btn { flex: 1; }
.symbol-list { padding: 0 16px 0 13px; }
.w-star { width: 31px; }
.w-price { width: 120px; }
.w-vol { width: 104px; }
.w-change { width: 83px; }
.symbol-list th { height: 43px; border-bottom: 1px solid #0c1722; text-align: right; }
.symbol-list th.left { padding-left: 4px; text-align: left; }
.symbol-list th.change-head { padding-right: 10px; }
.vol-head { display: flex; align-items: center; justify-content: flex-end; padding-right: 4px; }
.vol-head svg { margin-left: 9px; }
.tag { height: 26px; margin-right: 6px; padding: 0 7px; border: 0; border-radius: 4px; background: rgba(255, 255, 255, 0.08); color: #a3a9b0; font-weight: 500; }
.symbol-list td { height: 64px; border-bottom: 1px solid #0c1722; font-size: 18px; }
.symbol-list tr:nth-child(3n) td { height: 63px; }
.star-cell { text-align: center; }
.pair-name { display: flex; align-items: center; gap: 10px; padding-left: 4px; font-weight: 500; }
.num { text-align: right; }
.tick { display: inline-block; margin-right: 7px; vertical-align: 2px; }
.change { display: flex; flex-direction: column; align-items: center; width: 60px; margin: 0 11px 0 auto; font-size: 15px; line-height: 16px; }

.board { display: grid; grid-template-columns: 807fr 557fr; gap: 3px; flex: 1; min-height: 0; }
.center { display: grid; grid-template-rows: minmax(0, 1fr) auto; gap: 3px; min-width: 0; min-height: 0; }
.chart { display: flex; }
.tools { display: flex; flex-direction: column; align-items: center; gap: 17px; width: 68px; padding-top: 19px; border-right: 1px solid #0c1722; flex: none; }
.tools .plain { width: 32px; height: 30px; color: #cfd3d7; }
.tools svg { width: 32px; height: 32px; fill: none; stroke: currentColor; stroke-width: 1.3; }
.tools .solid { fill: currentColor; stroke: none; }
.chart-main { display: flex; flex-direction: column; flex: 1; min-width: 0; }
.chart-head { display: flex; align-items: center; height: 51px; padding-right: 15px; border-bottom: 1px solid #0c1722; flex: none; }
.interval { align-self: stretch; width: 52px; padding-right: 4px; border-right: 1px solid #0c1722; color: #cfd3d7; }
.chart-head h2 { display: flex; align-items: center; gap: 5px; margin: 0 auto 0 17px; font-size: 15px; font-weight: 500; }
.badge { padding: 0 7px; border-radius: 4px; background: rgba(255, 255, 255, 0.08); color: #9aa1a8; font-size: 14px; }
.venues { margin-left: 9px; }
.plot { width: 100%; flex: 1; min-height: 0; font-size: 15px; }
.grid path { fill: none; stroke: #27323e; stroke-width: 1.4; }
.volume.g { fill: #26bd98; opacity: 0.38; }
.volume.r { fill: #dd3d60; opacity: 0.27; }
.candle.g { fill: #22bb95; }
.candle.r { fill: #db365a; }
.last-line { stroke: #26b38e; stroke-dasharray: 2 3; }
.axis { fill: #cfd3d7; }
.last-price { fill: #fff; font-weight: 500; }
.ohlc { fill: #26b38e; }
.ohlc .key { fill: #dfe2e6; }
.ohlc .label { fill: #8b929a; }

.tickets { display: grid; grid-template-columns: 1fr 1fr; gap: 3px; }
.ticket { padding: 22px 21px 22px 20px; }
.ticket header { display: grid; grid-template-columns: 1fr auto 1fr; align-items: center; height: 24px; }
.ticket h3 { grid-column: 2; display: flex; align-items: center; gap: 5px; font-size: 18px; }
.second { margin-left: 5px; }
.state { display: flex; align-items: center; justify-content: flex-end; gap: 13px; padding-right: 5px; }
.live { width: 12px; height: 12px; border-radius: 50%; background: #26b894; }
.aggregate { margin-top: 2px; color: #6f7780; font-size: 14px; line-height: 18px; text-align: center; }
.prices { display: grid; grid-template-columns: 1fr 1fr 1fr; gap: 6px; height: 66px; }
.price { display: flex; flex-direction: column; align-items: flex-end; padding: 6px 4px 0 0; color: #9aa1a8; font-size: 20px; line-height: 22px; }
.price b { color: #e8eaed; font-size: 35px; font-weight: 400; line-height: 36px; }
.spread { display: flex; flex-direction: column; align-items: center; padding-top: 6px; }
.arrow { display: flex; align-items: center; height: 16px; }
.arrow .large { width: 28px; height: 20px; }
.arrow .small { width: 18px; height: 13px; }
.bps { display: inline-block; min-width: 63px; border-radius: 4px; background: rgba(255, 255, 255, 0.07); font-size: 14px; line-height: 26px; text-align: center; }
.ticket input { height: 31px; min-width: 0; padding: 0; border: 1px solid #1b2632; border-radius: 4px; background: #0f1923; color: #4b555f; text-align: center; }
.quantity { display: grid; grid-template-columns: 1fr 1fr 1fr; gap: 6px; margin: 11px 0 5px; }
.quantity input { grid-column: 2; width: 100%; }
.trade { display: grid; grid-template-columns: 1fr 1fr 1fr; gap: 6px; margin-bottom: 15px; }
.level { display: grid; grid-template-columns: 47px 1fr 63px 1fr 47px; align-items: center; height: 36px; }
.level.labels { height: 18px; margin-bottom: 4px; color: #6f7780; font-size: 14px; justify-items: center; }
.lmt { justify-self: start; padding-left: 8px; font-size: 20px; white-space: nowrap; }
.lmt.right { justify-self: end; padding: 0 9px 0 0; }
.labels .lmt { font-size: 14px; }
.labels span { white-space: nowrap; }
.lmt small { margin-left: 2px; color: #9aa1a8; font-size: 14px; }
.depth { position: relative; display: flex; align-items: center; justify-content: center; height: 36px; }
.depth i { position: absolute; height: 100%; background: #268680; }
.step-1 i { background: #227773; }
.step-2 i { background: #19666a; }
.depth .bps { position: relative; background: rgba(255, 255, 255, 0.05); }

.side { display: grid; grid-template-rows: 439fr 464fr; gap: 3px; min-width: 0; min-height: 0; }
.treasury { display: flex; flex-direction: column; }
.panel-head { display: flex; align-items: center; justify-content: space-between; height: 50px; padding: 0 14px 0 16px; border-bottom: 1px solid #0b1621; flex: none; }
.panel-head h2 { display: flex; align-items: center; font-size: 15px; }
.assets { width: 90px; }
.donut { flex: 1; width: 100%; min-height: 0; font-size: 15px; }
.dash { fill: none; stroke: #4a545e; stroke-dasharray: 10 11; stroke-width: 1.2; }
.holding { fill: #dfe2e6; }
.share { fill: #8b929a; }
.muted-text { fill: #9aa1a8; font-size: 14px; }
.total { fill: #e8eaed; font-size: 26px; font-weight: 500; }
.book { overflow: hidden; }
.slash { margin: 0 8px; color: #8b929a; }
.book h2 strong { margin-left: 5px; font-weight: 500; }
.stepper { display: flex; align-items: center; justify-content: space-between; width: 99px; height: 31px; padding: 0 11px; border-radius: 4px; background: rgba(255, 255, 255, 0.08); }
.stepper .plain { color: #59636d; }
.w-book-price { width: 91px; }
.w-book-bps { width: 100px; }
.w-book-qty { width: 191px; }
.book th { height: 43px; border-bottom: 1px solid #0b1621; font-size: 14px; text-align: left; }
.book th.mid { text-align: center; }
.book th.right { text-align: right; }
.book td { height: 43px; border-bottom: 1px solid #0d1824; }
.book th:first-child, .book td:first-child { padding-left: 16px; }
.book th:last-child, .book td.right { padding-right: 14px; }
.book .bps { min-width: 34px; color: #8b929a; line-height: 21px; vertical-align: middle; }
.book tbody tr:first-child td { height: 31px; padding-bottom: 11px; line-height: 18px; }
.book tbody tr:first-child .bps { line-height: 18px; vertical-align: top; }
.bar { display: block; height: 11px; border-radius: 1px; }
.ask .bar { background: #3b2532; }
.bid .bar { background: #134543; }
.book .spot-row td { height: 53px; background: #1f2932; }
.spot-price { display: flex; align-items: center; font-size: 18px; }
.spot-price svg { margin-left: 7px; }
.toggle { display: flex; gap: 3px; margin-left: 17px; padding: 2px; border-radius: 5px; background: #0d1722; }
.toggle button { height: 27px; padding: 0 8px; border: 0; border-radius: 4px; background: none; color: #a3a9b0; font-size: 14px; font-weight: 500; }
.toggle button[aria-pressed="true"] { background: #39434d; color: #e4e7ea; }

.orders { margin-top: 3px; padding-bottom: 1px; flex: none; }
.order-tabs { display: flex; align-items: center; height: 51px; padding-right: 14px; background: #1f2932; }
.order-tabs button:not(.btn) { height: 51px; padding: 0 16px; border: 0; background: none; color: #a3a9b0; font-size: 18px; font-weight: 500; }
.order-tabs button.active:not(.btn) { padding: 0 17px 0 13px; background: #131e2a; color: #f0f2f4; }
.expand { margin-left: auto; }
.sub-tabs { display: flex; align-items: center; gap: 22px; height: 53px; margin: 0 14px 0 13px; border-bottom: 1px solid #0b1621; }
.sub-tabs button:not(.btn) { height: 53px; padding: 3px 0 0; border: 0; border-bottom: 3px solid transparent; background: none; color: #8b929a; font-size: 18px; }
.sub-tabs button.active:not(.btn) { border-color: #e8eaed; color: #e8eaed; }
.sub-tabs .archive { width: 116px; gap: 6px; margin-left: auto; color: #dfe2e6; }
.order-table { padding: 0 14px 0 13px; }
.order-table th { height: 43px; padding: 0 16px; border-bottom: 1px solid #0d1824; font-size: 14px; text-align: left; }
.order-table td { height: 43px; padding: 0 16px; border-bottom: 1px solid #0d1824; font-size: 16px; }
.order-table .right { text-align: right; }
.order-table th:first-child, .order-table td:first-child { padding-left: 15px; }
.order-table em { color: #8b929a; }
.w-date { width: 176px; }
.w-side { width: 73px; }
.w-symbol { width: 135px; }
.w-qty { width: 145px; }
.w-strategy { width: 125px; }
.w-id { width: 104px; }
.w-status { width: 127px; }
.w-menu { width: 53px; }
.date-head { display: flex; align-items: center; justify-content: space-between; }
.order-table th:first-child { padding-right: 18px; }
.order-table td:first-child { padding-right: 0; }
.order-table td:nth-child(11) { padding-right: 0; }
.order-symbol { display: flex; align-items: center; gap: 7px; font-size: 15px; }
.status { display: flex; align-items: center; gap: 7px; }
.fill { display: flex; align-items: center; gap: 11px; }
.fill span { width: 50px; }
.track { flex: 1; height: 8px; overflow: hidden; border-radius: 4px; background: #2c3641; }
.track i { display: block; height: 100%; border-right: 1px solid #131e2a; background: #18a79d; }
.order-table .menu-cell { padding: 0; text-align: center; }
.menu-cell .plain { width: 100%; }
</style>
